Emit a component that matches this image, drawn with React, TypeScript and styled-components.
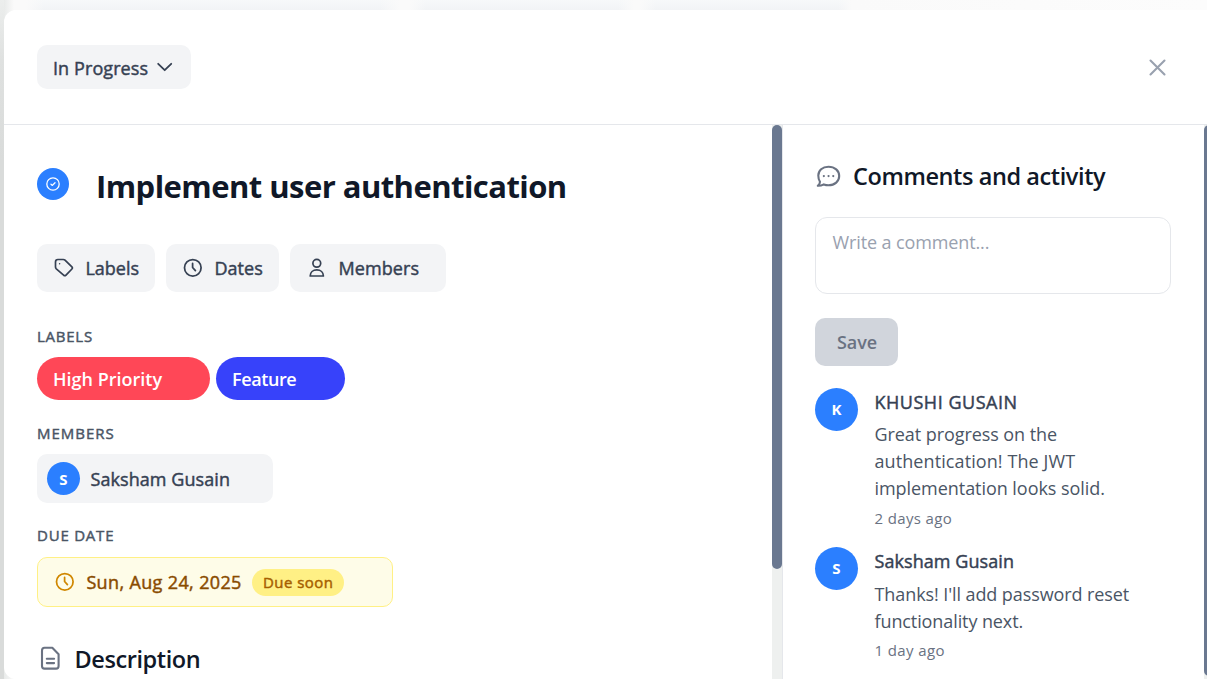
import React from "react";
import styled, { createGlobalStyle } from "styled-components";

const Global = createGlobalStyle`
  * { box-sizing: border-box; }
  html, body, #root { margin: 0; height: 679px; overflow: hidden; }
  body { font-family: "Open Sans", "Noto Sans", sans-serif; background: #fff; color: #364153; }
  button, textarea { font: inherit; color: inherit; }
`;

const Backdrop = styled.div`
  height: 679px;
  padding: 10px 0 0 4px;
  background:
    linear-gradient(180deg, #eceeed, #dfe1e0 60px, #d9dbda 160px) 0 0 / 4px 100% no-repeat,
    linear-gradient(90deg, #e9ebea 4px, #fafafa 14px, #fafafa 26px, rgba(250, 250, 250, 0) 44px, rgba(250, 250, 250, 0) 380px, #fafafa 400px, #fafafa 410px, rgba(250, 250, 250, 0) 426px, rgba(250, 250, 250, 0) 618px, #fafafa 634px, #fafafa 640px, rgba(250, 250, 250, 0) 656px, rgba(250, 250, 250, 0) 838px, #fafafa 852px, #fcfcfc 100%),
    linear-gradient(180deg, #f7f9fa, #f2f4f6 10px);
`;

const Dialog = styled.main`
  height: 669px;
  display: flex;
  flex-direction: column;
  background: #fff;
  border-radius: 12px 0 0 12px;
  overflow: hidden;
`;

/* Medium text thickens the regular cut, as the family ships without a 500 weight. */
const Line = styled.span<{ $size: number; $weight?: number; $track?: number; $lh?: number; $color?: string }>`
  display: block;
  white-space: nowrap;
  font-size: ${(p) => p.$size}px;
  font-weight: ${(p) => p.$weight ?? 400};
  -webkit-text-stroke: ${(p) => (p.$weight === 500 ? "0.45px currentColor" : "0")};
  letter-spacing: ${(p) => p.$track ?? 0}px;
  line-height: ${(p) => p.$lh ?? 27}px;
  color: ${(p) => p.$color ?? "inherit"};
`;

const Header = styled.header`
  height: 115px;
  flex: none;
  display: flex;
  align-items: flex-start;
  justify-content: space-between;
  padding: 35px 37px 0 33px;
  border-bottom: 1px solid #e5e7eb;
`;

const StatusButton = styled.button`
  display: flex;
  align-items: center;
  gap: 9px;
  width: 154px;
  height: 44px;
  padding: 3px 0 0 16px;
  border: 0;
  border-radius: 10px;
  background: #f3f4f6;
`;

const ChevronSlot = styled.span`
  display: flex;
  padding-bottom: 3px;
`;

const CloseButton = styled.button`
  display: flex;
  padding: 0;
  margin-top: 10px;
  border: 0;
  background: none;
  color: #99a1af;
`;

const Columns = styled.div`
  flex: 1;
  display: flex;
  min-height: 0;
`;

const Details = styled.section`
  width: 768px;
  padding: 40px 0 0 33px;
`;

const Scrollbar = styled.div<{ $width: number; $track: string }>`
  width: ${(p) => p.$width}px;
  flex: none;
  overflow: hidden;
  background: ${(p) => p.$track};
`;

const Thumb = styled.div<{ $height: number; $width: number }>`
  width: ${(p) => p.$width}px;
  height: ${(p) => p.$height}px;
  border-radius: 5px;
  background: #6a7890;
`;

const Activity = styled.aside`
  width: 422px;
  flex: none;
  border-left: 1px solid #e5e7eb;
  padding: 36px 0 0 32px;
`;

const TitleRow = styled.div`
  display: flex;
  gap: 27px;
  height: 79px;
`;

const TaskBadge = styled.div`
  width: 32px;
  height: 32px;
  margin-top: 3px;
  border-radius: 50%;
  background: #2b7fff;
  color: #fff;
  display: grid;
  place-items: center;
`;

const Actions = styled.div`
  display: flex;
  gap: 11px;
`;

const Action = styled.button<{ $width: number }>`
  display: flex;
  align-items: center;
  gap: 10.4px;
  width: ${(p) => p.$width}px;
  height: 48px;
  padding: 0 0 0 16px;
  border: 0;
  border-radius: 10px;
  background: #f3f4f6;
`;

const Group = styled.div<{ $top: number; $gap: number }>`
  margin-top: ${(p) => p.$top}px;
  display: flex;
  flex-direction: column;
  gap: ${(p) => p.$gap}px;
`;

const Pills = styled.div`
  display: flex;
  gap: 6px;
`;

const Pill = styled.div<{ $color: string; $width: number }>`
  width: ${(p) => p.$width}px;
  height: 43px;
  padding: 9px 0 0 16px;
  border-radius: 22px;
  background: ${(p) => p.$color};
  color: #fff;
`;

const Member = styled.div`
  display: flex;
  align-items: center;
  gap: 10.5px;
  width: 236px;
  height: 49px;
  padding-left: 10px;
  border-radius: 10px;
  background: #f3f4f6;
`;

const MemberName = styled.div`
  padding-top: 1px;
`;

const Avatar = styled.div<{ $size: number }>`
  width: ${(p) => p.$size}px;
  height: ${(p) => p.$size}px;
  flex: none;
  border-radius: 50%;
  background: #2b7fff;
  color: #fff;
  display: grid;
  place-items: center;
`;

const DueCard = styled.div`
  display: flex;
  align-items: center;
  width: 356px;
  height: 50px;
  padding-left: 16px;
  border: 1px solid #fff085;
  border-radius: 10px;
  background: #fefce8;
  color: #d08700;
`;

const DueDate = styled.div`
  width: 176px;
  padding-left: 10.4px;
`;

const SoonTag = styled.div`
  width: 92px;
  height: 27px;
  padding-left: 11px;
  border-radius: 14px;
  background: #fff085;
`;

const Heading = styled.div<{ $gap: number; $top?: number; $left?: number }>`
  display: flex;
  align-items: center;
  gap: ${(p) => p.$gap}px;
  height: 32px;
  margin-top: ${(p) => p.$top ?? 0}px;
  padding-left: ${(p) => p.$left ?? 0}px;
  color: #6a7282;
`;

const CommentBox = styled.div`
  width: 356px;
  height: 77px;
  margin-top: 25px;
  padding: 11px 16.5px;
  border: 1px solid #e5e7eb;
  border-radius: 12px;
`;

const SaveButton = styled.button`
  display: block;
  width: 83px;
  height: 48px;
  margin: 24px 0 22px;
  padding: 0 0 0 22px;
  border: 0;
  border-radius: 10px;
  background: #d1d5dc;
  text-align: left;
`;

const Comment = styled.article<{ $height: number }>`
  display: flex;
  gap: 16.5px;
  height: ${(p) => p.$height}px;
`;

const CommentBody = styled.div<{ $gap: number; $stampGap: number }>`
  display: flex;
  flex-direction: column;
  padding-top: 1px;
  > :first-child { margin-bottom: ${(p) => p.$gap}px; }
  > :last-child { margin-top: ${(p) => p.$stampGap}px; }
`;

const Glyph = ({ w, h = w, sw, children }: { w: number; h?: number; sw: number; children: React.ReactNode }) => (
  <svg width={w} height={h} viewBox={`0 0 ${w} ${h}`} fill="none" stroke="currentColor" strokeWidth={sw} strokeLinecap="round" strokeLinejoin="round">
    {children}
  </svg>
);

const Clock = () => (
  <Glyph w={22} sw={1.75}>
    <circle cx="10.8" cy="10.8" r="8.3" />
    <path d="M10.6 6.4V10.5L13.4 13.6" />
  </Glyph>
);

const SectionLabel = ({ children, track }: { children: string; track: number }) => (
  <Line $size={15} $weight={500} $track={track} $lh={20} $color="#4a5565">{children}</Line>
);

export default function App() {
  return (
    <>
      <Global />
      <Backdrop>
        <Dialog>
          <Header>
            <StatusButton>
              <Line $size={18} $weight={500} $track={0.09}>In Progress</Line>
              <ChevronSlot><Glyph w={16} sw={1.8}><path d="M1.2 4.8L7.7 11.2L14.2 4.8" /></Glyph></ChevronSlot>
            </StatusButton>
            <CloseButton aria-label="Close">
              <Glyph w={26} sw={2.1}><path d="M6.5 5.5L20.5 19.5M20.5 5.5L6.5 19.5" /></Glyph>
            </CloseButton>
          </Header>
          <Columns>
            <Details>
              <TitleRow>
                <TaskBadge>
                  <Glyph w={16} sw={1.3}>
                    <circle cx="8" cy="8" r="6.2" />
                    <path d="M6 8.2L7.4 9.4L10 6.7" />
                  </Glyph>
                </TaskBadge>
                <Line $size={31} $weight={700} $track={-0.55} $lh={42} $color="#101828">Implement user authentication</Line>
              </TitleRow>
              <Actions>
                <Action $width={118}>
                  <Glyph w={22} sw={1.7}>
                    <path d="M2.5 4.9C2.5 3.4 3.3 2.5 4.9 2.5H10.3C11 2.5 11.5 2.7 12 3.2L18.9 9.9C19.6 10.6 19.6 11.3 18.9 12L13 18.1C12.2 18.9 11.4 18.9 10.6 18.1L3.3 11.8C2.8 11.3 2.5 10.8 2.5 10.1Z" />
                    <circle cx="6.6" cy="6.7" r=".75" fill="currentColor" stroke="none" />
                  </Glyph>
                  <Line $size={18} $weight={500}>Labels</Line>
                </Action>
                <Action $width={113}>
                  <Clock />
                  <Line $size={18} $weight={500} $track={0.05}>Dates</Line>
                </Action>
                <Action $width={156}>
                  <Glyph w={22} sw={1.7}>
                    <circle cx="10.8" cy="6.3" r="3.9" />
                    <path d="M4.2 19C4.2 15.4 7 12.9 10.8 12.9S17.4 15.4 17.4 19Z" />
                  </Glyph>
                  <Line $size={18} $weight={500} $track={0.1}>Members</Line>
                </Action>
              </Actions>
              <Group $top={34} $gap={11}>
                <SectionLabel track={0.75}>LABELS</SectionLabel>
                <Pills>
                  <Pill $color="#ff4757" $width={173}><Line $size={18} $weight={600}>High Priority</Line></Pill>
                  <Pill $color="#3742fa" $width={129}><Line $size={18} $weight={600} $track={-0.4}>Feature</Line></Pill>
                </Pills>
              </Group>
              <Group $top={23} $gap={11}>
                <SectionLabel track={0.98}>MEMBERS</SectionLabel>
                <Member>
                  <Avatar $size={33}><Line $size={15} $weight={700} $lh={20}>S</Line></Avatar>
                  <MemberName><Line $size={18} $weight={500} $track={0.07}>Saksham Gusain</Line></MemberName>
                </Member>
              </Group>
              <Group $top={22} $gap={12}>
                <SectionLabel track={0.78}>DUE DATE</SectionLabel>
                <DueCard>
                  <Clock />
                  <DueDate><Line $size={18} $weight={500} $track={0.36} $color="#894b00">Sun, Aug 24, 2025</Line></DueDate>
                  <SoonTag><Line $size={15} $weight={500} $track={0.45} $color="#a65f00">Due soon</Line></SoonTag>
                </DueCard>
              </Group>
              <Heading $gap={12.5} $top={36} $left={3}>
                <Glyph w={22} h={26} sw={2.1}>
                  <path d="M4.5 1.8H12.3L18.6 8.2V20C18.6 21.8 17.8 22.6 16.1 22.6H4.5C2.8 22.6 2 21.8 2 20V4.4C2 2.6 2.8 1.8 4.5 1.8ZM6.8 12.7H14.1M6.8 17.1H14.1" />
                </Glyph>
                <Line $size={23.5} $weight={600} $track={-0.42} $lh={32} $color="#101828">Description</Line>
              </Heading>
            </Details>
            <Scrollbar $width={10} $track="#eef0ef"><Thumb $width={10} $height={444} /></Scrollbar>
            <Activity>
              <Heading $gap={12} $top={-1}>
                <Glyph w={26} sw={2.1}>
                  <path d="M13.5 3.7C7.3 3.7 3.3 7.5 3.3 12.6C3.3 15.2 3.9 17.3 5 18.8C5 20.5 4.2 21.7 2.8 22.8C5.2 22.9 7.1 22.3 8.8 21.4C10.2 21.9 11.7 22.2 13.5 22.2C19.8 22.2 24.2 18.3 24.2 13S19.8 3.7 13.5 3.7Z" />
                  <path d="M8.8 13.1H8.9M13.5 13.1H13.6M18.2 13.1H18.3" />
                </Glyph>
                <Line $size={23.5} $weight={600} $track={-0.41} $lh={32} $color="#101828">Comments and activity</Line>
              </Heading>
              <CommentBox><Line $size={18} $track={-0.12} $color="#99a1af">Write a comment...</Line></CommentBox>
              <SaveButton><Line $size={18} $weight={600} $track={-0.1} $color="#6a7282">Save</Line></SaveButton>
              <Comment $height={159}>
                <Avatar $size={43}><Line $size={15} $weight={700}>K</Line></Avatar>
                <CommentBody $gap={5} $stampGap={3}>
                  <Line $size={18} $weight={500} $track={0.52}>KHUSHI GUSAIN</Line>
                  <Line $size={18} $track={-0.07} $color="#4a5565">Great progress on the</Line>
                  <Line $size={18} $track={0.09} $color="#4a5565">authentication! The JWT</Line>
                  <Line $size={18} $track={-0.05} $color="#4a5565">implementation looks solid.</Line>
                  <Line $size={15} $track={0.36} $color="#6a7282">2 days ago</Line>
                </CommentBody>
              </Comment>
              <Comment $height={132}>
                <Avatar $size={43}><Line $size={15} $weight={700}>S</Line></Avatar>
                <CommentBody $gap={6} $stampGap={2}>
                  <Line $size={18} $weight={500} $track={0.07}>Saksham Gusain</Line>
                  <Line $size={18} $track={-0.09} $color="#4a5565">Thanks! I'll add password reset</Line>
                  <Line $size={18} $track={-0.1} $color="#4a5565">functionality next.</Line>
                  <Line $size={15} $track={0.4} $color="#6a7282">1 day ago</Line>
                </CommentBody>
              </Comment>
            </Activity>
            <Scrollbar $width={3} $track="#eef0ef"><Thumb $width={10} $height={551} /></Scrollbar>
          </Columns>
        </Dialog>
      </Backdrop>
    </>
  );
}
